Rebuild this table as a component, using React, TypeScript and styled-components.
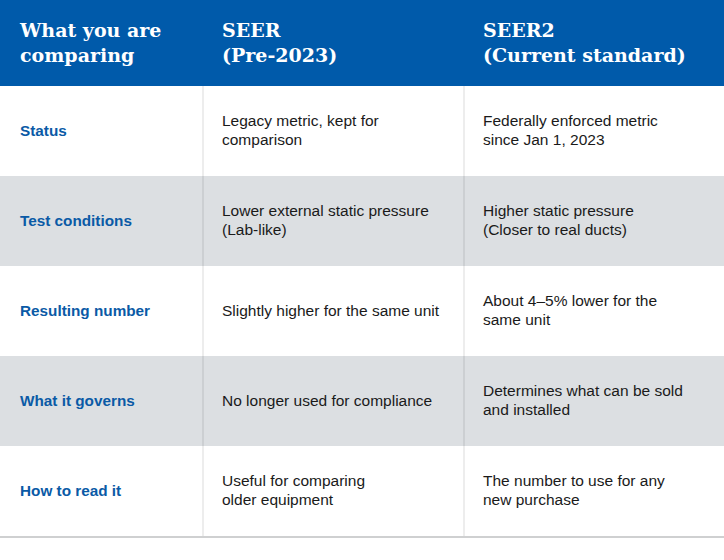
import React from "react";
import styled, { createGlobalStyle } from "styled-components";

const GlobalStyle = createGlobalStyle`
  html, body {
    margin: 0;
    padding: 0;
    background: #ffffff;
  }
  body {
    font-family: "Liberation Sans", Arial, sans-serif;
  }
`;

const Table = styled.div`
  width: 724px;
  display: grid;
  grid-template-columns: 202px 261px 261px;
  border-bottom: 2px solid #cfd0d1;
`;

const HeadCell = styled.div`
  height: 86px;
  box-sizing: border-box;
  padding: 18px 20px 0;
  background: #005aaa;
  color: #ffffff;
  font-family: "DejaVu Serif", "Liberation Serif", serif;
  font-weight: bold;
  font-size: 19px;
  line-height: 25px;
`;

const Cell = styled.div<{ $shade: boolean; $divider: boolean }>`
  height: 90px;
  box-sizing: border-box;
  padding: 0 20px 2px ${({ $divider }) => ($divider ? "18px" : "20px")};
  display: flex;
  align-items: center;
  background: ${({ $shade }) => ($shade ? "#dcdfe2" : "#ffffff")};
  border-left: ${({ $divider }) =>
    $divider ? "2px solid rgba(0, 0, 0, 0.07)" : "none"};
  font-size: 15.5px;
  line-height: 19px;
  color: #1a1a1a;
`;

const Label = styled(Cell)`
  color: #0a5aa6;
  font-weight: bold;
  font-size: 15.3px;
`;

const rows = [
  {
    label: "Status",
    seer: ["Legacy metric, kept for", "comparison"],
    seer2: ["Federally enforced metric", "since Jan 1, 2023"],
  },
  {
    label: "Test conditions",
    seer: ["Lower external static pressure", "(Lab-like)"],
    seer2: ["Higher static pressure", "(Closer to real ducts)"],
  },
  {
    label: "Resulting number",
    seer: ["Slightly higher for the same unit"],
    seer2: ["About 4\u20135% lower for the", "same unit"],
  },
  {
    label: "What it governs",
    seer: ["No longer used for compliance"],
    seer2: ["Determines what can be sold", "and installed"],
  },
  {
    label: "How to read it",
    seer: ["Useful for comparing", "older equipment"],
    seer2: ["The number to use for any", "new purchase"],
  },
];

const Lines = ({ lines }: { lines: string[] }) => (
  <div>
    {lines.map((l, i) => (
      <div key={i}>{l}</div>
    ))}
  </div>
);

export default function App() {
  return (
    <>
      <GlobalStyle />
      <Table>
        <HeadCell>
          What you are
          <br />
          comparing
        </HeadCell>
        <HeadCell>
          SEER
          <br />
          (Pre-2023)
        </HeadCell>
        <HeadCell>
          SEER2
          <br />
          (Current standard)
        </HeadCell>
        {rows.map((r, i) => (
          <React.Fragment key={r.label}>
            <Label $shade={i % 2 === 1} $divider={false}>
              {r.label}
            </Label>
            <Cell $shade={i % 2 === 1} $divider>
              <Lines lines={r.seer} />
            </Cell>
            <Cell $shade={i % 2 === 1} $divider>
              <Lines lines={r.seer2} />
            </Cell>
          </React.Fragment>
        ))}
      </Table>
    </>
  );
}
